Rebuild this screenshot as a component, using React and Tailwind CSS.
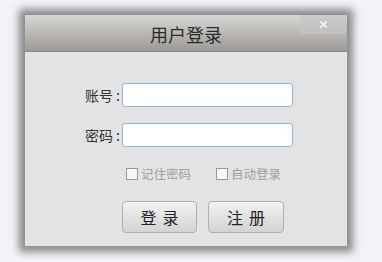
export default function App() {
  return (
    <div
      className="w-[382px] h-[262px] bg-[#f3f4f8] pt-[15px] pl-[25px]"
      style={{ fontFamily: '"Noto Sans CJK SC", "Noto Sans", sans-serif' }}
    >
      <div className="w-[322px] h-[231px] bg-[#e3e3e3] flex flex-col shadow-[0_0_8px_6px_rgba(90,90,90,0.7)]">
        {/* Title bar */}
        <div className="relative h-[37px] bg-gradient-to-b from-[#d8d7d5] to-[#9d9a96] border-b border-[#8e8b88] flex items-center justify-center">
          <span className="text-[18px] text-[#2b2b2b] leading-none mt-[1px]">用户登录</span>
          <div className="absolute top-0 right-[1px] w-[46px] h-[19px] bg-[#c6c5c3]/70 flex items-center justify-center">
            <svg width="9" height="9" viewBox="0 0 10 10">
              <path d="M2 2 L8 8 M8 2 L2 8" stroke="#f4f4f4" strokeWidth="2" strokeLinecap="round" />
            </svg>
          </div>
        </div>

        {/* Form */}
        <div className="flex flex-col pt-[31px]">
          <div className="flex items-center h-[24px]">
            <span className="w-[97px] text-right text-[14px] text-[#333] pr-[2px]">账号 :</span>
            <input className="w-[171px] h-[24px] bg-white border border-[#8db6d6] rounded-[3px] outline-none" />
          </div>
          <div className="flex items-center h-[24px] mt-[16px]">
            <span className="w-[97px] text-right text-[14px] text-[#333] pr-[2px]">密码 :</span>
            <input type="password" className="w-[171px] h-[24px] bg-white border border-[#8db6d6] rounded-[3px] outline-none" />
          </div>

          <div className="flex items-center mt-[19px] h-[16px] pl-[101px] text-[12.5px] text-[#a0a0a0]">
            <label className="flex items-center gap-[3px]">
              <span className="w-[12px] h-[12px] bg-[#f7f7f7] border border-[#9a9a9a]"></span>
              <span>记住密码</span>
            </label>
            <label className="flex items-center gap-[3px] ml-[25px]">
              <span className="w-[12px] h-[12px] bg-[#f7f7f7] border border-[#9a9a9a]"></span>
              <span>自动登录</span>
            </label>
          </div>

          <div className="flex mt-[19px] pl-[97px] gap-[11px]">
            <button className="w-[75px] h-[32px] rounded-[4px] border border-[#b0b0b0] bg-gradient-to-b from-[#f2f2f2] to-[#d3d3d3] text-[16px] text-[#222] tracking-[6px] pl-[6px]">
              登录
            </button>
            <button className="w-[76px] h-[32px] rounded-[4px] border border-[#b0b0b0] bg-gradient-to-b from-[#f2f2f2] to-[#d3d3d3] text-[16px] text-[#222] tracking-[6px] pl-[6px]">
              注册
            </button>
          </div>
        </div>
      </div>
    </div>
  );
}
